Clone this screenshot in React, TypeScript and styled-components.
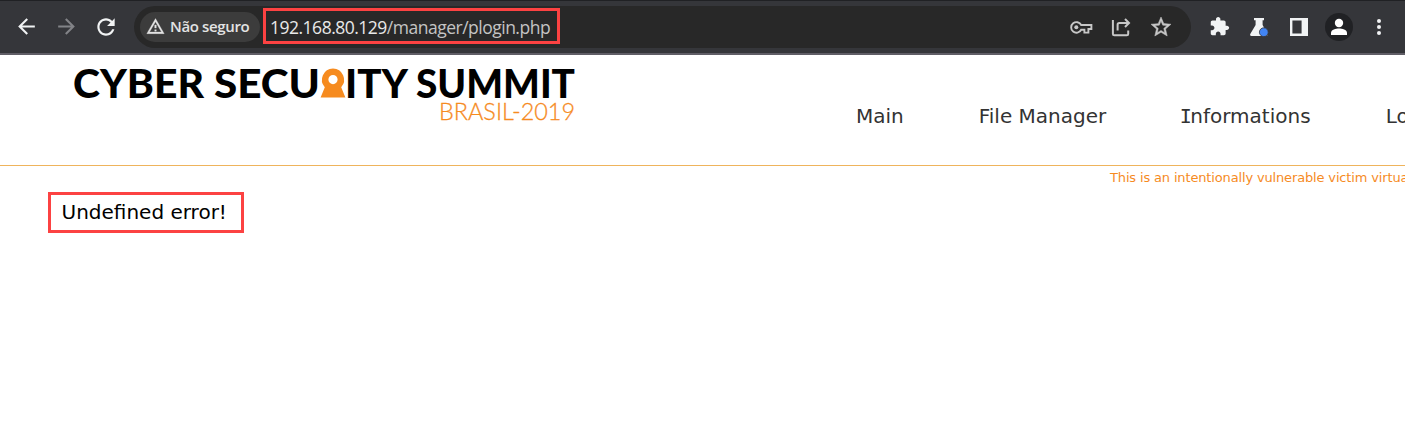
import React from "react";
import styled, { createGlobalStyle } from "styled-components";

const GlobalStyle = createGlobalStyle`
  *, *::before, *::after { box-sizing: border-box; }
  html, body { margin: 0; background: #fff; overflow: hidden; }
`;

const Window = styled.div`
  width: 100%;
  height: 448px;
  overflow: hidden;
  background: #fff;
`;

const Toolbar = styled.header`
  display: flex;
  align-items: center;
  height: 55px;
  padding: 0 6px 1px 6px;
  background: #35363a;
  border-top: 1px solid #202124;
  border-bottom: 2px solid #605e66;
`;

const IconButton = styled.span<{ $color?: string }>`
  display: flex;
  flex: 0 0 40px;
  height: 40px;
  align-items: center;
  justify-content: center;
  color: ${(p) => p.$color ?? "#f1f3f4"};
  svg { display: block; }
`;

const AddressBar = styled.div`
  display: flex;
  flex: 0 0 1057px;
  align-items: center;
  height: 42px;
  margin: 0 8px;
  padding: 0 10px 0 6px;
  border-radius: 21px;
  background: #282828;
`;

const SecurityChip = styled.div`
  display: flex;
  align-items: center;
  flex: 0 0 120px;
  height: 30px;
  padding-left: 6px;
  gap: 5px;
  border-radius: 15px;
  background: #3c3c3c;
  color: #e3e3e3;
  font: 600 15px/28px "Open Sans", sans-serif;
  letter-spacing: -0.35px;
  white-space: nowrap;
`;

const ChipLabel = styled.span`
  height: 30px;
`;

const Highlight = styled.div<{ $width: number; $height: number }>`
  display: flex;
  align-items: center;
  flex: none;
  width: ${(p) => p.$width}px;
  height: ${(p) => p.$height}px;
  border: 3px solid #fc4242;
  white-space: nowrap;
`;

const UrlBox = styled(Highlight)`
  margin: -2px auto 0 3px;
  padding: 2px 0 0 4px;
  color: #c4c4c4;
  font: 400 17.5px/28px "Open Sans", sans-serif;
  letter-spacing: -0.5px;
`;

const Host = styled.span`
  color: #e8e8e8;
`;

const Avatar = styled.span`
  display: flex;
  align-items: center;
  justify-content: center;
  width: 28px;
  height: 28px;
  border-radius: 50%;
  background: #202124;
`;

const SiteHeader = styled.div`
  display: flex;
  height: 111px;
  padding-left: 70px;
  border-bottom: 1px solid #efb45c;
`;

const Logo = styled.svg`
  display: block;
  flex: 0 0 510px;
  height: 75px;
`;

const LogoTitle = styled.text`
  font: 900 40px Lato, sans-serif;
  fill: #000;
`;

const LogoSubtitle = styled.text`
  font: 300 23.5px Lato, sans-serif;
  fill: #f68b1f;
  stroke: #f68b1f;
  stroke-width: 0.3px;
`;

const Navigation = styled.nav`
  display: flex;
  flex: none;
  gap: 75px;
  margin-left: 276px;
  padding-top: 48px;
  color: #333;
  font: 400 20px/26px "DejaVu Sans", sans-serif;
  white-space: nowrap;
`;

const NavItem = styled.span<{ $width: number }>`
  flex: 0 0 ${(p) => p.$width}px;
`;

const SlabInitial = styled.span`
  margin: 0 -1.5px 0 -2px;
  font-family: "DejaVu Sans Mono", monospace;
`;

const Notice = styled.p`
  margin: 0 0 0 1110px;
  height: 26px;
  color: #f68b1f;
  font: 400 13px/23px "DejaVu Sans", sans-serif;
  letter-spacing: -0.15px;
  white-space: nowrap;
`;

const ErrorBox = styled(Highlight)`
  margin-left: 48px;
  padding: 0 0 1px 10.5px;
  color: #000;
  font: 400 20px/26px "DejaVu Sans", sans-serif;
`;

type GlyphProps = { d: string; size?: number; outline?: number };

const Glyph = ({ d, size = 24, outline = 0 }: GlyphProps) => (
  <svg width={size} height={size} viewBox="0 0 24 24" fill="currentColor" stroke="currentColor" strokeWidth={outline}>
    <path fillRule="evenodd" d={d} />
  </svg>
);

const BACK = "M20 11H7.83l5.59-5.59L12 4l-8 8 8 8 1.41-1.41L7.83 13H20v-2z";
const FORWARD = "M12 4l-1.41 1.41L16.17 11H4v2h12.17l-5.58 5.59L12 20l8-8z";
const RELOAD =
  "M17.65 6.35C16.2 4.9 14.21 4 12 4c-4.42 0-7.99 3.58-7.99 8s3.57 8 7.99 8c3.73 0 6.84-2.55 7.73-6h-2.08c-.82 2.33-3.04 4-5.65 4-3.31 0-6-2.69-6-6s2.69-6 6-6c1.66 0 3.14.69 4.22 1.78L13 11h7V4l-2.35 2.35z";
const WARNING = "M12 5.99L19.53 19H4.47L12 5.99M12 2L1 21h22L12 2zm1 14h-2v2h2v-2zm0-6h-2v4h2v-4z";
const STAR =
  "M22 9.24l-7.19-.62L12 2 9.19 8.63 2 9.24l5.46 4.73L5.82 21 12 17.27 18.18 21l-1.63-7.03L22 9.24zM12 15.4l-3.76 2.27 1-4.28-3.32-2.88 4.38-.38L12 6.1l1.71 4.04 4.38.38-3.32 2.88 1 4.28L12 15.4z";
const PUZZLE =
  "M20.5 11H19V7c0-1.1-.9-2-2-2h-4V3.5C13 2.12 11.88 1 10.5 1S8 2.12 8 3.5V5H4c-1.1 0-1.99.9-1.99 2v3.8H3.5c1.49 0 2.7 1.21 2.7 2.7s-1.21 2.7-2.7 2.7H2V20c0 1.1.9 2 2 2h3.8v-1.5c0-1.49 1.21-2.7 2.7-2.7 1.49 0 2.7 1.21 2.7 2.7V22H17c1.1 0 2-.9 2-2v-4h1.5c1.38 0 2.5-1.12 2.5-2.5S21.88 11 20.5 11z";

const KeyIcon = () => (
  <svg width="24" height="24" viewBox="0 0 24 24" fill="none" stroke="currentColor" strokeWidth="1.9">
    <path d="M12.2 10A5.3 5.3 0 1 0 12.2 14.8H15.4V17.6H19.4V14H22.4V10Z" />
    <circle cx="7.3" cy="12.3" r="2" fill="currentColor" stroke="none" />
  </svg>
);

const ShareIcon = () => (
  <svg width="24" height="24" viewBox="0 0 24 24" fill="none" stroke="currentColor" strokeWidth="2">
    <path d="M3.9 5V18.9Q3.9 20.3 5.3 20.3H17.8Q19.2 20.3 19.2 18.9V15.5" />
    <path d="M8.6 15.5V9.7Q8.6 8 10.3 8H19.5M16 4L20 8L16 12" />
  </svg>
);

const FlaskIcon = () => (
  <svg width="24" height="24" viewBox="0 0 24 24">
    <path d="M7 3H17V5.2H15.6V10L20.4 18.7Q21 21 19 21H4.5Q2.4 20.5 3.4 18.7L8.6 10V5.2H7Z" fill="#f1f3f4" />
    <circle cx="16.8" cy="17.2" r="4.4" fill="#4285f4" stroke="#35363a" strokeWidth="0.8" />
  </svg>
);

const PanelIcon = () => (
  <svg width="24" height="24" viewBox="0 0 24 24">
    <path fillRule="evenodd" d="M3 3H21V21H3ZM5.4 5.4V18.6H14.6V5.4Z" fill="#f1f3f4" />
  </svg>
);

const PersonIcon = () => (
  <svg width="20" height="20" viewBox="0 0 20 20" fill="#fff">
    <circle cx="10" cy="6" r="4.2" />
    <path d="M2 18V15.7C2 12.8 7 11.5 10 11.5S18 12.8 18 15.7V18Z" />
  </svg>
);

const MenuIcon = () => (
  <svg width="24" height="24" viewBox="0 0 24 24" fill="currentColor">
    <circle cx="12" cy="6" r="2" />
    <circle cx="12" cy="12" r="2" />
    <circle cx="12" cy="18" r="2" />
  </svg>
);

const SummitLogo = () => (
  <Logo viewBox="0 0 510 75">
    <LogoTitle x="3" y="42.5" textLength="131" lengthAdjust="spacingAndGlyphs">CYBER</LogoTitle>
    <LogoTitle x="144" y="42.5" textLength="106" lengthAdjust="spacingAndGlyphs">SECU</LogoTitle>
    <path
      fillRule="evenodd"
      fill="#f68b1f"
      d="M263 13.5a11.3 11.3 0 0 1 8.2 18.8L275.4 42.5H250.6L254.8 32.3A11.3 11.3 0 0 1 263 13.5Zm0 6.5a4.6 4.6 0 1 0 0 9.2a4.6 4.6 0 0 0 0-9.2Z"
    />
    <LogoTitle x="275" y="42.5" textLength="63" lengthAdjust="spacingAndGlyphs">ITY</LogoTitle>
    <LogoTitle x="346" y="42.5" textLength="159" lengthAdjust="spacingAndGlyphs">SUMMIT</LogoTitle>
    <LogoSubtitle x="369" y="65" textLength="136" lengthAdjust="spacingAndGlyphs">BRASIL-2019</LogoSubtitle>
  </Logo>
);

export default function App() {
  return (
    <Window>
      <GlobalStyle />
      <Toolbar>
        <IconButton><Glyph d={BACK} size={25} /></IconButton>
        <IconButton $color="#828387"><Glyph d={FORWARD} size={25} /></IconButton>
        <IconButton><Glyph d={RELOAD} size={26} /></IconButton>
        <AddressBar>
          <SecurityChip>
            <Glyph d={WARNING} size={19} outline={0.4} />
            <ChipLabel>Não seguro</ChipLabel>
          </SecurityChip>
          <UrlBox $width={297} $height={36}>
            <Host>192.168.80.129</Host>/manager/plogin.php
          </UrlBox>
          <IconButton $color="#c7c7c7"><KeyIcon /></IconButton>
          <IconButton $color="#c7c7c7"><ShareIcon /></IconButton>
          <IconButton $color="#c7c7c7"><Glyph d={STAR} outline={0.5} /></IconButton>
        </AddressBar>
        <IconButton><Glyph d={PUZZLE} size={21} /></IconButton>
        <IconButton><FlaskIcon /></IconButton>
        <IconButton><PanelIcon /></IconButton>
        <IconButton><Avatar><PersonIcon /></Avatar></IconButton>
        <IconButton><MenuIcon /></IconButton>
      </Toolbar>
      <SiteHeader>
        <SummitLogo />
        <Navigation>
          <NavItem $width={47}>Main</NavItem>
          <NavItem $width={128}>File Manager</NavItem>
          <NavItem $width={129}><SlabInitial>I</SlabInitial>nformations</NavItem>
          <NavItem $width={74}>Lo</NavItem>
        </Navigation>
      </SiteHeader>
      <Notice>This is an intentionally vulnerable victim virtua</Notice>
      <ErrorBox $width={196} $height={41}>Undefined error!</ErrorBox>
    </Window>
  );
}
